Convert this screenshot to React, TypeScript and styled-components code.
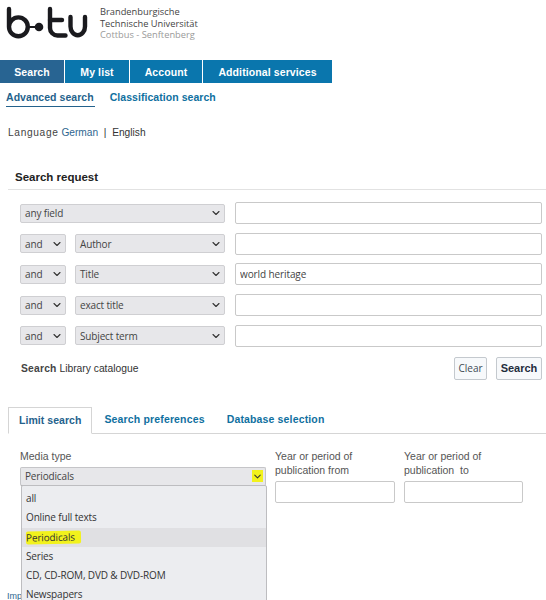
import React from "react";
import styled, { createGlobalStyle } from "styled-components";
import { ChevronDown } from "lucide-react";

const GlobalStyle = createGlobalStyle`
  html, body {
    margin: 0;
    padding: 0;
    background: #fff;
    overflow: hidden;
  }
  * { box-sizing: border-box; }
`;

const Page = styled.div`
  position: relative;
  width: 546px;
  height: 600px;
  overflow: hidden;
  font-family: "Liberation Sans", Arial, sans-serif;
  font-size: 11px;
  color: #333;
`;

const Header = styled.header`
  display: flex;
  height: 60px;
  padding: 5px 0 0 6px;
  gap: 10px;
`;

const BrandText = styled.div`
  display: flex;
  flex-direction: column;
  padding-top: 1px;
  font-family: "Open Sans", sans-serif;
  font-size: 9.3px;
  line-height: 11.7px;
  color: #444;
`;

const BrandLine = styled.span<{ $muted?: boolean }>`
  color: ${(p) => (p.$muted ? "#9a9a9a" : "#444")};
`;

const Nav = styled.nav`
  display: flex;
  gap: 1px;
  height: 23px;
  width: 332px;
`;

const NavItem = styled.a<{ $active?: boolean; $w: number }>`
  display: flex;
  align-items: center;
  justify-content: center;
  width: ${(p) => p.$w}px;
  background: ${(p) => (p.$active ? "#286492" : "#0a76ad")};
  color: #fff;
  font-weight: bold;
  font-size: 10.5px;
  letter-spacing: 0.1px;
`;

const SubNav = styled.div`
  display: flex;
  gap: 15px;
  padding: 8px 0 0 6px;
  height: 25px;
`;

const SubLink = styled.a<{ $active?: boolean }>`
  height: 16px;
  padding-right: 1px;
  line-height: 13px;
  font-weight: bold;
  font-size: 10.5px;
  letter-spacing: 0.05px;
  color: ${(p) => (p.$active ? "#24628c" : "#0f70a0")};
  border-bottom: ${(p) => (p.$active ? "1px solid #24628c" : "none")};
`;

const LangRow = styled.div`
  padding: 18px 0 0 8px;
  height: 44px;
  font-size: 10.2px;
  line-height: 13px;
`;

const LangLabel = styled.span`
  color: #444;
  letter-spacing: 0.65px;
`;

const LangLink = styled.a`
  color: #2f6690;
`;

const SectionHead = styled.div`
  margin: 17px 0 0 8px;
  padding: 0 0 5px 7px;
  height: 21px;
  line-height: 16px;
  border-bottom: 1px solid #e2e2e2;
  font-weight: bold;
  font-size: 11.5px;
  color: #222;
`;

const Rows = styled.div`
  display: flex;
  flex-direction: column;
  gap: 8.7px;
  padding: 12px 4px 0 20px;
`;

const Row = styled.div`
  display: flex;
  align-items: center;
  height: 22px;
  gap: 10px;
`;

const SelectBox = styled.div<{ $w?: number; $h?: number }>`
  display: flex;
  align-items: center;
  justify-content: space-between;
  flex: none;
  width: ${(p) => p.$w ?? 205}px;
  height: ${(p) => p.$h ?? 19}px;
  padding: 0 2px 0 4px;
  background: #e7e7ea;
  border: 1px solid #cfcfd2;
  border-radius: 2px;
  font-family: "Open Sans", sans-serif;
  font-size: 10px;
  letter-spacing: -0.15px;
  color: #444;
`;

const Pair = styled.div`
  display: flex;
  gap: 9px;
`;

const TextInput = styled.input<{ $w?: number }>`
  flex: ${(p) => (p.$w ? "none" : "1")};
  width: ${(p) => (p.$w ? `${p.$w}px` : "auto")};
  height: 22px;
  min-width: 0;
  padding: 0 4px;
  background: #fff;
  border: 1px solid #c9c9c9;
  border-radius: 2px;
  font-family: "Open Sans", sans-serif;
  font-size: 10px;
  letter-spacing: -0.1px;
  color: #444;
  outline: none;
`;

const ActionBar = styled.div`
  display: flex;
  align-items: center;
  justify-content: space-between;
  height: 23px;
  margin-top: 10px;
  padding: 0 4px 0 21px;
`;

const Scope = styled.div`
  font-size: 10.3px;
  color: #333;
`;

const ScopeLabel = styled.b`
  color: #444;
  letter-spacing: 0.2px;
`;

const ActionButtons = styled.div`
  display: flex;
  gap: 9px;
`;

const Btn = styled.button<{ $primary?: boolean; $w: number }>`
  width: ${(p) => p.$w}px;
  height: 23px;
  padding: 0;
  background: #f7f9fb;
  border: 1px solid #c4c9ce;
  border-radius: 2px;
  font-family: ${(p) => (p.$primary ? '"Liberation Sans", sans-serif' : '"Open Sans", sans-serif')};
  font-size: ${(p) => (p.$primary ? 11 : 10)}px;
  font-weight: ${(p) => (p.$primary ? "bold" : "normal")};
  color: ${(p) => (p.$primary ? "#1f2d3d" : "#3f4a55")};
`;

const TabBar = styled.div`
  display: flex;
  align-items: stretch;
  height: 27px;
  margin: 27px 0 0 8px;
  border-bottom: 1px solid #d5d5d5;
`;

const Tab = styled.a<{ $active?: boolean }>`
  display: flex;
  align-items: center;
  height: ${(p) => (p.$active ? "27px" : "25px")};
  margin-right: ${(p) => (p.$active ? "12px" : "22px")};
  padding: ${(p) => (p.$active ? "0 10px" : "0")};
  background: #fff;
  border: ${(p) => (p.$active ? "1px solid #d5d5d5" : "none")};
  border-bottom: ${(p) => (p.$active ? "1px solid #fff" : "none")};
  font-weight: bold;
  font-size: 10.5px;
  letter-spacing: ${(p) => (p.$active ? "0.05px" : "0.15px")};
  color: ${(p) => (p.$active ? "#24628c" : "#0f70a0")};
`;

const LimitGrid = styled.div`
  display: flex;
  padding: 16px 0 0 20px;
`;

const MediaCol = styled.div`
  width: 255px;
`;

const FieldLabel = styled.div`
  font-size: 10.5px;
  line-height: 14px;
  color: #555;
`;

const MediaLabel = styled(FieldLabel)`
  height: 16px;
  line-height: 13px;
`;

const YearCol = styled.div<{ $w: number }>`
  display: flex;
  flex-direction: column;
  width: ${(p) => p.$w}px;
`;

const YearLabel = styled(FieldLabel)`
  height: 32px;
  margin-top: -1px;
`;

const MediaSelect = styled(SelectBox)`
  margin-top: 1px;
  border-color: #c5c5c8;
  border-bottom-color: #a8a8aa;
`;

const Marked = styled.span`
  display: flex;
  align-items: center;
  justify-content: center;
  width: 11px;
  height: 12px;
  background: #f2f21c;
`;

const Footer = styled.a`
  position: absolute;
  left: 7px;
  top: 591px;
  font-size: 9px;
  color: #2f6690;
`;

const Dropdown = styled.ul`
  position: absolute;
  left: 21px;
  top: 485px;
  width: 246px;
  height: 130px;
  margin: 0;
  padding: 3px 0 0;
  list-style: none;
  background: #ecedf0;
  border: 1px solid #bdbdc0;
  border-radius: 2px;
`;

const Option = styled.li<{ $hover?: boolean }>`
  height: 19.3px;
  padding-left: 4px;
  line-height: 19px;
  background: ${(p) => (p.$hover ? "#e0e0e3" : "transparent")};
  font-family: "Open Sans", sans-serif;
  font-size: 10px;
  letter-spacing: -0.15px;
  color: #333;
`;

const Highlight = styled.span`
  display: inline-block;
  padding: 0 6px 0 0;
  height: 13px;
  line-height: 13px;
  background: #f2f21c;
  border-radius: 2px;
  transform: rotate(-1deg);
`;

const Logo = () => (
  <svg width="84" height="34" viewBox="0 0 84 34" fill="none" stroke="#1a1a1e" strokeWidth="4.4" strokeLinecap="round" aria-label="b-tu">
    <path d="M3 4V21.8a9.4 9.4 0 1 0 9.4-9.4a9.4 9.4 0 0 0-9.4 9.4" />
    <path d="M21 22H33" strokeWidth="1.8" />
    <circle cx="33" cy="22" r="4.3" fill="#1a1a1e" stroke="none" />
    <path d="M44 4V23a7.5 7.5 0 0 0 7.5 7.5H59.5" />
    <path d="M44 15H56" />
    <path d="M64.5 12V21.5a7.25 8.8 0 0 0 14.5 0V12" />
  </svg>
);

const Chevron = () => <ChevronDown size={12} strokeWidth={2.2} color="#333" />;

const fields = [
  { op: "", field: "any field", value: "" },
  { op: "and", field: "Author", value: "" },
  { op: "and", field: "Title", value: "world heritage" },
  { op: "and", field: "exact title", value: "" },
  { op: "and", field: "Subject term", value: "" },
];

const media = ["all", "Online full texts", "Periodicals", "Series", "CD, CD-ROM, DVD & DVD-ROM", "Newspapers"];

export default function App() {
  return (
    <Page>
      <GlobalStyle />
      <Header>
        <Logo />
        <BrandText>
          <BrandLine>Brandenburgische</BrandLine>
          <BrandLine>Technische Universität</BrandLine>
          <BrandLine $muted>Cottbus - Senftenberg</BrandLine>
        </BrandText>
      </Header>

      <Nav>
        <NavItem $active $w={64}>Search</NavItem>
        <NavItem $w={64}>My list</NavItem>
        <NavItem $w={72}>Account</NavItem>
        <NavItem $w={129}>Additional services</NavItem>
      </Nav>

      <SubNav>
        <SubLink $active>Advanced search</SubLink>
        <SubLink>Classification search</SubLink>
      </SubNav>

      <LangRow>
        <LangLabel>Language</LangLabel> <LangLink>German</LangLink>&nbsp; | &nbsp;English
      </LangRow>

      <SectionHead>Search request</SectionHead>

      <Rows>
        {fields.map((f) => (
          <Row key={f.field}>
            {f.op ? (
              <Pair>
                <SelectBox $w={46}>
                  {f.op}
                  <Chevron />
                </SelectBox>
                <SelectBox $w={150}>
                  {f.field}
                  <Chevron />
                </SelectBox>
              </Pair>
            ) : (
              <SelectBox>
                {f.field}
                <Chevron />
              </SelectBox>
            )}
            <TextInput defaultValue={f.value} />
          </Row>
        ))}
      </Rows>

      <ActionBar>
        <Scope>
          <ScopeLabel>Search</ScopeLabel> Library catalogue
        </Scope>
        <ActionButtons>
          <Btn $w={33}>Clear</Btn>
          <Btn $primary $w={46}>Search</Btn>
        </ActionButtons>
      </ActionBar>

      <TabBar>
        <Tab $active>Limit search</Tab>
        <Tab>Search preferences</Tab>
        <Tab>Database selection</Tab>
      </TabBar>

      <LimitGrid>
        <MediaCol>
          <MediaLabel>Media type</MediaLabel>
          <MediaSelect $w={246} $h={19}>
            Periodicals
            <Marked>
              <ChevronDown size={11} strokeWidth={2.2} color="#333" />
            </Marked>
          </MediaSelect>
        </MediaCol>
        <YearCol $w={129}>
          <YearLabel>
            Year or period of
            <br />
            publication from
          </YearLabel>
          <TextInput $w={120} />
        </YearCol>
        <YearCol $w={120}>
          <YearLabel>
            Year or period of
            <br />
            publication&nbsp; to
          </YearLabel>
          <TextInput $w={119} />
        </YearCol>
      </LimitGrid>

      <Footer>Impressum</Footer>

      <Dropdown>
        {media.map((m) => (
          <Option key={m} $hover={m === "Periodicals"}>
            {m === "Periodicals" ? <Highlight>{m}</Highlight> : m}
          </Option>
        ))}
      </Dropdown>
    </Page>
  );
}
